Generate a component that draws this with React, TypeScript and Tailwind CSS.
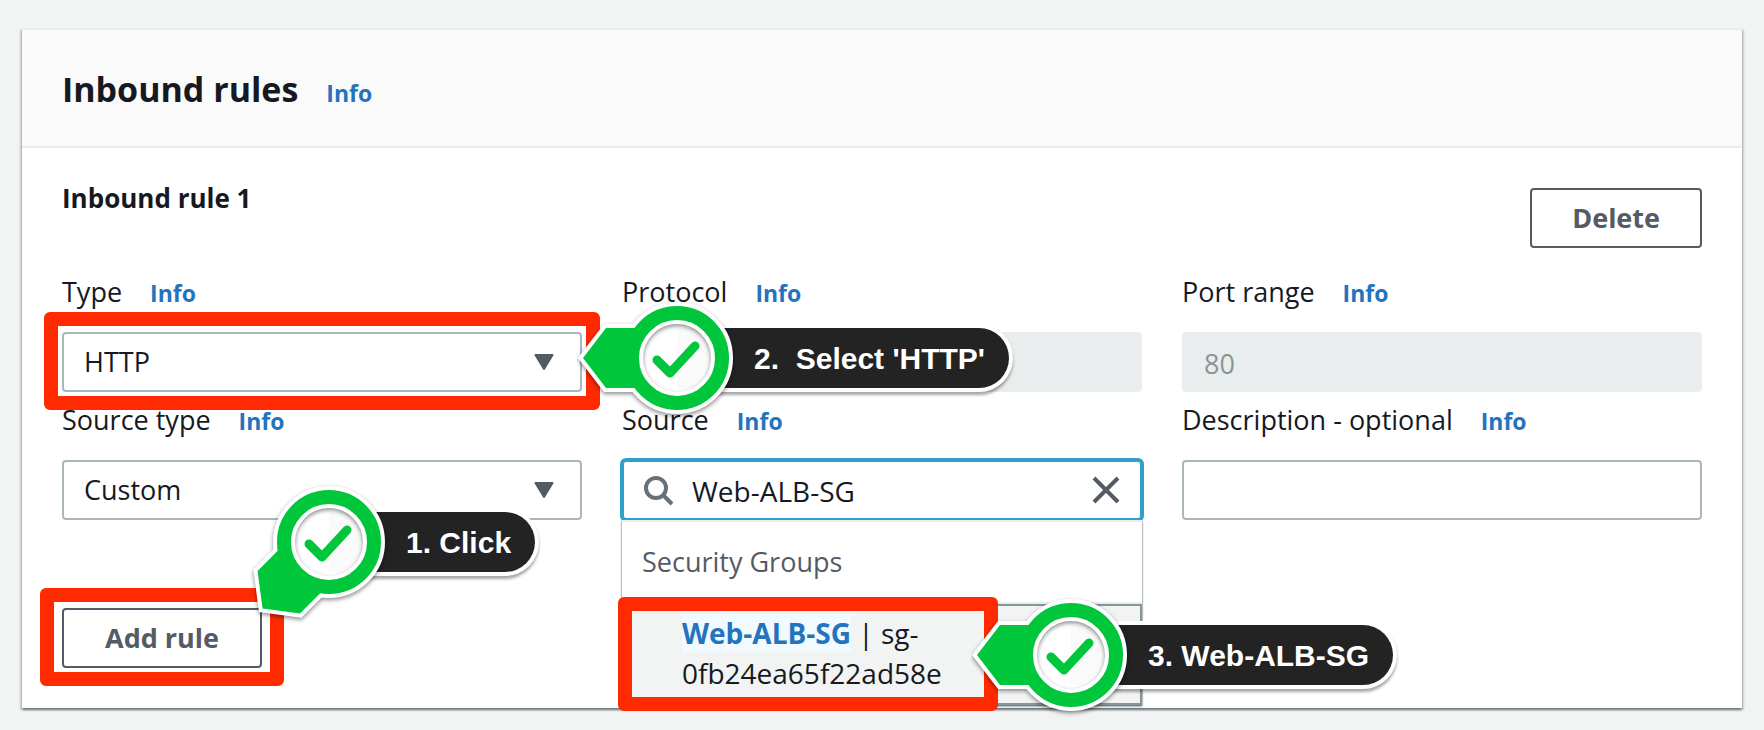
import type { ReactNode } from 'react';

function InfoLink() {
  return (
    <a href="#info" className="text-[23px] font-bold text-[#2474bd]">
      Info
    </a>
  );
}

function Highlight({ className }: { className: string }) {
  return (
    <div
      aria-hidden="true"
      className={`pointer-events-none absolute z-10 rounded-md border-14 border-[#ff2a00] ${className}`}
    />
  );
}

function Callout({
  className,
  rotate = 0,
  children,
}: {
  className: string;
  rotate?: number;
  children: ReactNode;
}) {
  return (
    <div className={`pointer-events-none absolute z-20 flex items-center ${className}`}>
      <svg viewBox="-100 -100 200 200" className="relative z-10 size-[200px] shrink-0" aria-hidden="true">
        <circle r="36" fill="#ffffff" fillOpacity="0.98" />
        <g className="drop-shadow-[0_2px_2px_rgba(0,0,0,0.45)]">
          <g transform={`rotate(${rotate})`}>
            <polygon points="-94,0 -71,-30 -38,-30 -38,30 -71,30" fill="#ffffff" stroke="#ffffff" strokeWidth="8" />
            <circle r="45" fill="none" stroke="#ffffff" strokeWidth="22" />
            <polygon points="-94,0 -71,-30 -40,-30 -40,30 -71,30" fill="#00c63c" />
            <circle r="45" fill="none" stroke="#00c63c" strokeWidth="14" />
          </g>
        </g>
        <path
          d="M-20 2 L-7 15 L18 -12"
          fill="none"
          stroke="#00c63c"
          strokeWidth="9"
          strokeLinecap="round"
          strokeLinejoin="round"
        />
      </svg>
      <div className="-ml-[100px] flex h-[60px] items-center rounded-r-full bg-[#232323] pt-0.5 pr-6 pl-[77px] font-['Liberation_Sans',Arial,sans-serif] text-[30px] leading-none font-bold whitespace-pre text-white shadow-[0_0_0_4px_#ffffff,0_3px_3px_4px_rgba(0,0,0,0.35)]">
        {children}
      </div>
    </div>
  );
}

function Field({ id, label, children }: { id: string; label: string; children: ReactNode }) {
  return (
    <div className="flex min-w-0 flex-col gap-5">
      <div className="flex h-10 items-baseline gap-7 leading-10">
        <label htmlFor={id}>{label}</label>
        <InfoLink />
      </div>
      <div className="relative">{children}</div>
    </div>
  );
}

function Select({ id, options }: { id: string; options: string[] }) {
  return (
    <>
      <select
        id={id}
        className="block h-[60px] w-full appearance-none rounded-sm border-2 border-[#aab7b8] bg-white px-5"
      >
        {options.map((option) => (
          <option key={option}>{option}</option>
        ))}
      </select>
      <svg
        viewBox="0 0 20 16"
        className="pointer-events-none absolute top-[22px] right-7 h-4 w-5"
        aria-hidden="true"
      >
        <path d="M1.5 1 H18.5 L10 15 Z" fill="#545b64" stroke="#545b64" strokeWidth="2" strokeLinejoin="round" />
      </svg>
    </>
  );
}

export default function App() {
  return (
    <main className="min-h-screen bg-[#f2f3f3] px-[22px] pt-7 pb-[22px] font-['Open_Sans','Noto_Sans',sans-serif] text-[27px] text-[#16191f]">
      <section className="border-t-2 border-[#eaeded] bg-white shadow-[0_2px_2px_0_rgba(0,28,36,0.4),2px_2px_2px_0_rgba(0,28,36,0.15),-2px_2px_2px_0_rgba(0,28,36,0.15)]">
        <header className="border-b-2 border-[#eaeded] bg-[#fafafa] px-10 pt-[39px] pb-[37px]">
          <div className="flex h-10 items-baseline gap-7 leading-10">
            <h2 className="text-[34px] font-bold">Inbound rules</h2>
            <InfoLink />
          </div>
        </header>

        <div className="p-10">
          <div className="mb-6 flex items-start justify-between">
            <h3 className="text-[26px] leading-5 font-bold">Inbound rule 1</h3>
            <button
              type="button"
              className="h-[60px] rounded-sm border-2 border-[#545b64] bg-white px-10 font-bold text-[#545b64]"
            >
              Delete
            </button>
          </div>

          <div className="grid grid-cols-3 gap-x-10 gap-y-2">
            <Field id="type" label="Type">
              <Select id="type" options={['HTTP', 'HTTPS', 'SSH']} />
              <Highlight className="-inset-x-[18px] -top-5 -bottom-[18px]" />
              <Callout className="-top-[74px] left-[calc(100%-5px)]">{"2.  Select 'HTTP'"}</Callout>
            </Field>

            <Field id="protocol" label="Protocol">
              <input
                id="protocol"
                disabled
                defaultValue="TCP"
                className="block h-[60px] w-full rounded-sm bg-[#eaeded] px-[22px] pt-0.5 text-[#879596]"
              />
            </Field>

            <Field id="port" label="Port range">
              <input
                id="port"
                disabled
                defaultValue="80"
                className="block h-[60px] w-full rounded-sm bg-[#eaeded] px-[22px] pt-0.5 text-[#879596]"
              />
            </Field>

            <Field id="source-type" label="Source type">
              <Select id="source-type" options={['Custom', 'Anywhere', 'My IP']} />
            </Field>

            <Field id="source" label="Source">
              <input
                id="source"
                defaultValue="Web-ALB-SG"
                className="block h-[60px] w-full rounded-sm border-2 border-[#2ea2cc] bg-white pt-0.5 pr-16 pl-[68px] text-[28px] shadow-[0_0_0_2px_#2ea2cc] outline-none"
              />
              <svg
                viewBox="0 0 32 32"
                className="pointer-events-none absolute top-[15px] left-[21px] size-8"
                fill="none"
                stroke="#687078"
                strokeWidth="4"
                aria-hidden="true"
              >
                <circle cx="13" cy="13" r="10" />
                <path d="M20 20 L29 29" />
              </svg>
              <button type="button" aria-label="Clear" className="absolute top-3.5 right-5 size-8">
                <svg viewBox="0 0 32 32" className="size-8" fill="none" stroke="#545b64" strokeWidth="4">
                  <path d="M4 4 L28 28 M28 4 L4 28" />
                </svg>
              </button>
              <div className="absolute inset-x-0 top-full z-10 border-t-2 border-[#eaeded] bg-white shadow-[0_2px_2px_0_rgba(0,28,36,0.3),1px_1px_1px_0_rgba(0,28,36,0.2),-1px_1px_1px_0_rgba(0,28,36,0.2)]">
                <p className="border-b-2 border-[#eaeded] px-5 py-5 leading-10 text-[#545b64]">Security Groups</p>
                <button
                  type="button"
                  className="relative block w-full border-2 border-[#879596] bg-[#f2f3f3] pt-[7px] pr-5 pb-2.5 pl-[58px] text-left text-[28px] leading-10"
                >
                  <mark className="bg-[#f1faff] font-bold text-[#2474bd]">Web-ALB-SG</mark> | sg-
                  <wbr />
                  0fb24ea65f22ad58e
                  <Highlight className="-top-[9px] -left-1.5 h-[114px] w-[380px]" />
                  <Callout className="-top-[51px] left-[347px]">3. Web-ALB-SG</Callout>
                </button>
              </div>
            </Field>

            <Field id="description" label="Description - optional">
              <input
                id="description"
                className="block h-[60px] w-full rounded-sm border-2 border-[#aab7b8] bg-white px-5"
              />
            </Field>
          </div>

          <div className="relative mt-[88px] w-fit">
            <button
              type="button"
              className="block h-[60px] rounded-sm border-2 border-[#545b64] bg-white px-[41px] font-bold text-[#545b64]"
            >
              Add rule
            </button>
            <Highlight className="-inset-x-[22px] -top-5 -bottom-[18px]" />
            <Callout className="-top-[166px] left-[calc(100%-33px)]" rotate={-45}>
              1. Click
            </Callout>
          </div>
        </div>
      </section>
    </main>
  );
}
